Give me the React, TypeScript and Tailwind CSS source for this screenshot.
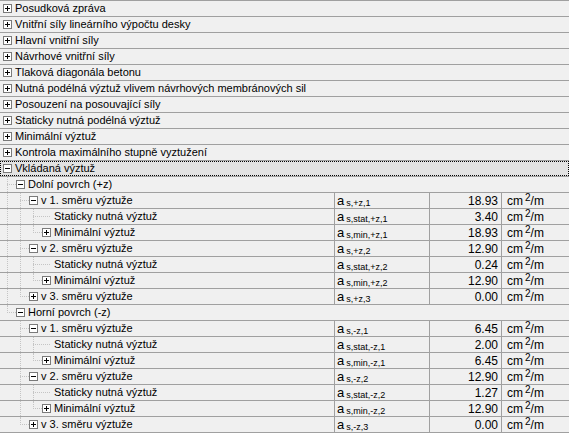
import React from 'react';

type Node = {
  label: string;
  open?: boolean;
  sym?: string;
  value?: string;
  children?: Node[];
  selected?: boolean;
};

const dir = (n: number, sign: '+z' | '-z', vals: [string, string, string], open = true): Node => ({
  label: `v ${n}. směru výztuže`,
  open,
  sym: `s,${sign},${n}`,
  value: vals[0],
  children: open
    ? [
        { label: 'Staticky nutná výztuž', sym: `s,stat,${sign},${n}`, value: vals[1] },
        { label: 'Minimální výztuž', open: false, sym: `s,min,${sign},${n}`, value: vals[2], children: [] },
      ]
    : [],
});

const tree: Node[] = [
  'Posudková zpráva',
  'Vnitřní síly lineárního výpočtu desky',
  'Hlavní vnitřní síly',
  'Návrhové vnitřní síly',
  'Tlaková diagonála betonu',
  'Nutná podélná výztuž vlivem návrhových membránových sil',
  'Posouzení na posouvající síly',
  'Staticky nutná podélná výztuž',
  'Minimální výztuž',
  'Kontrola maximálního stupně vyztužení',
].map((label) => ({ label, open: false, children: [] as Node[] }));

tree.push({
  label: 'Vkládaná výztuž',
  open: true,
  selected: true,
  children: [
    {
      label: 'Dolní povrch (+z)',
      open: true,
      children: [
        dir(1, '+z', ['18.93', '3.40', '18.93']),
        dir(2, '+z', ['12.90', '0.24', '12.90']),
        dir(3, '+z', ['0.00', '', ''], false),
      ],
    },
    {
      label: 'Horní povrch (-z)',
      open: true,
      children: [
        dir(1, '-z', ['6.45', '2.00', '6.45']),
        dir(2, '-z', ['12.90', '1.27', '12.90']),
        dir(3, '-z', ['0.00', '', ''], false),
      ],
    },
  ],
});

type Flat = { node: Node; level: number; last: boolean; trail: boolean[] };

function flatten(nodes: Node[], level: number, trail: boolean[], out: Flat[]) {
  nodes.forEach((node, i) => {
    const last = i === nodes.length - 1;
    out.push({ node, level, last, trail });
    if (node.open && node.children) flatten(node.children, level + 1, [...trail, !last], out);
  });
  return out;
}

const rows = flatten(tree, 0, [], []);

function Expander({ open }: { open: boolean }) {
  return (
    <span className="relative z-10 flex h-[9px] w-[9px] shrink-0 items-center justify-center border border-[#7a7a7a] bg-white">
      <span className="absolute h-px w-[5px] bg-black" />
      {!open && <span className="absolute h-[5px] w-px bg-black" />}
    </span>
  );
}

// dotted connector lines of the tree
function Guides({ level, last, trail, leaf }: { level: number; last: boolean; trail: boolean[]; leaf: boolean }) {
  if (level === 0) return null;
  const px = 7 + 13 * (level - 1);
  return (
    <>
      {trail.slice(1, level).map((cont, k) =>
        cont ? (
          <span
            key={k}
            className="absolute top-0 bottom-0 border-l border-dotted border-[#c4c4c4]"
            style={{ left: 7 + 13 * k }}
          />
        ) : null,
      )}
      <span
        className="absolute top-0 border-l border-dotted border-[#c4c4c4]"
        style={{ left: px, bottom: last ? 7 : 0 }}
      />
      <span
        className="absolute top-[7px] border-t border-dotted border-[#c4c4c4]"
        style={{ left: px, width: leaf ? 17 : 9 }}
      />
    </>
  );
}

function Row({ f }: { f: Flat }) {
  const { node, level, last, trail } = f;
  const leaf = !node.children;
  const hasData = node.sym !== undefined;
  return (
    <div className="flex h-4 border-b border-[#a0a0a0]">
      <div
        className={`relative flex items-center ${hasData ? 'w-[335px] shrink-0 border-r border-[#a0a0a0]' : 'flex-1'}`}
      >
        <Guides level={level} last={last} trail={trail} leaf={leaf} />
        <div
          className={`flex h-full flex-1 items-center ${node.selected ? 'bg-[#e2e2e2] outline-1 outline-dotted outline-offset-[-1px] outline-black' : ''}`}
          style={{ paddingLeft: 3 + 13 * level }}
        >
          {leaf ? <span className="w-[9px] shrink-0" /> : <Expander open={!!node.open} />}
          <span className="whitespace-nowrap pl-[3px]">{node.label}</span>
        </div>
      </div>
      {hasData && (
        <>
          <div className="flex w-[95px] shrink-0 items-center border-r border-[#a0a0a0] pl-[2px]">
            <span className="text-[13px] leading-none">a</span>
            <span className="relative top-[3px] pl-[2px] text-[9px] leading-none">{node.sym}</span>
          </div>
          <div className="flex w-[72px] shrink-0 items-center justify-end border-r border-[#a0a0a0] pr-[3px] text-[12px]">
            {node.value}
          </div>
          <div className="flex flex-1 items-center pl-[5px] text-[12px]">
            cm<span className="relative -top-[3px] ml-[2px] text-[10px] leading-none">2</span>/m
          </div>
        </>
      )}
    </div>
  );
}

export default function App() {
  return (
    <div
      className="h-[433px] w-[569px] overflow-hidden border-t border-[#a0a0a0] bg-[#f0f0f0] text-[11px] leading-none text-black"
      style={{ fontFamily: '"Liberation Sans", Arial, sans-serif' }}
    >
      {rows.map((f, i) => (
        <Row key={i} f={f} />
      ))}
    </div>
  );
}
